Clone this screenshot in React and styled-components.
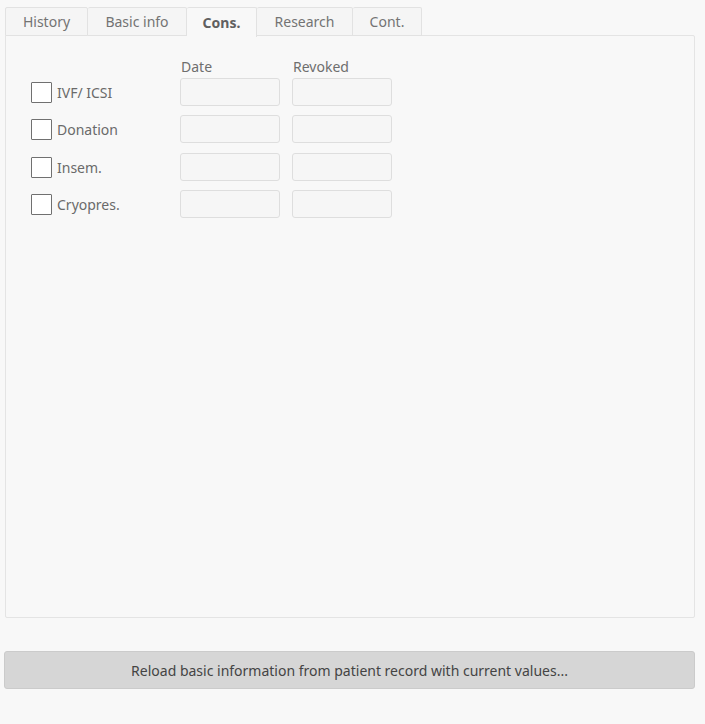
import React from "react";
import styled, { createGlobalStyle } from "styled-components";

const Global = createGlobalStyle`
  html, body { margin: 0; padding: 0; background: #f8f8f8; }
  body { font-family: "Noto Sans", "Open Sans", sans-serif; font-size: 14px; color: #666666; }
`;

const Page = styled.div`
  width: 705px;
  height: 724px;
  box-sizing: border-box;
  padding: 7px 10px 0 5px;
  display: flex;
  flex-direction: column;
`;

const TabBar = styled.div`
  display: flex;
  height: 29px;
  position: relative;
  z-index: 1;
`;

const Tab = styled.div`
  box-sizing: border-box;
  width: ${(p) => p.$w}px;
  height: ${(p) => (p.$active ? 30 : 29)}px;
  display: flex;
  align-items: center;
  justify-content: center;
  border: 1px solid #e2e2e2;
  border-left-width: ${(p) => (p.$first ? 1 : 0)}px;
  border-bottom: ${(p) => (p.$active ? "none" : "1px solid #e2e2e2")};
  border-radius: 2px 2px 0 0;
  background: ${(p) => (p.$active ? "#f8f8f8" : "#f5f5f5")};
  font-weight: ${(p) => (p.$active ? 700 : 400)};
  color: ${(p) => (p.$active ? "#606060" : "#737373")};
  font-size: 14px;
  padding-bottom: 1px;
`;

const Panel = styled.div`
  box-sizing: border-box;
  margin-top: -1px;
  height: 583px;
  border: 1px solid #e4e4e4;
  border-radius: 0 2px 2px 2px;
  background: #f8f8f8;
  padding: 24px 0 0 25px;
`;

const Grid = styled.div`
  display: grid;
  grid-template-columns: 137px 100px 100px;
  column-gap: 12px;
  row-gap: 9.5px;
  align-items: center;
`;

const HeaderLabel = styled.div`
  font-size: 14px;
  color: #6e6e6e;
  line-height: 16px;
  margin-left: 1px;
  margin-bottom: -8px;
  position: relative;
  top: -1px;
`;

const CheckRow = styled.label`
  display: flex;
  align-items: center;
  gap: 5px;
  color: #6a6a6a;
  font-size: 14px;
  padding-top: 1px;
`;

const Box = styled.span`
  box-sizing: border-box;
  width: 21px;
  height: 21px;
  border: 1px solid #707070;
  background: #fff;
  border-radius: 1px;
`;

const Field = styled.div`
  box-sizing: border-box;
  height: 28px;
  border: 1px solid #dedede;
  border-radius: 3px;
  background: #f6f6f6;
`;

const Footer = styled.div`
  padding-top: 33px;
  margin-left: -1px;
`;

const Button = styled.div`
  box-sizing: border-box;
  height: 38px;
  width: 691px;
  display: flex;
  align-items: center;
  justify-content: center;
  background: #d6d6d6;
  border: 1px solid #cbcbcb;
  border-radius: 3px;
  color: #444444;
  font-size: 14px;
`;

const tabs = [
  { label: "History", w: 83 },
  { label: "Basic info", w: 99 },
  { label: "Cons.", w: 70, active: true },
  { label: "Research", w: 96 },
  { label: "Cont.", w: 69 },
];

const rows = ["IVF/ ICSI", "Donation", "Insem.", "Cryopres."];

export default function App() {
  return (
    <>
      <Global />
      <Page>
        <TabBar>
          {tabs.map((t, i) => (
            <Tab key={t.label} $w={t.w} $active={t.active} $first={i === 0}>
              {t.label}
            </Tab>
          ))}
        </TabBar>
        <Panel>
          <Grid>
            <div />
            <HeaderLabel>Date</HeaderLabel>
            <HeaderLabel>Revoked</HeaderLabel>
            {rows.map((r) => (
              <React.Fragment key={r}>
                <CheckRow>
                  <Box />
                  {r}
                </CheckRow>
                <Field />
                <Field />
              </React.Fragment>
            ))}
          </Grid>
        </Panel>
        <Footer>
          <Button>Reload basic information from patient record with current values...</Button>
        </Footer>
      </Page>
    </>
  );
}
